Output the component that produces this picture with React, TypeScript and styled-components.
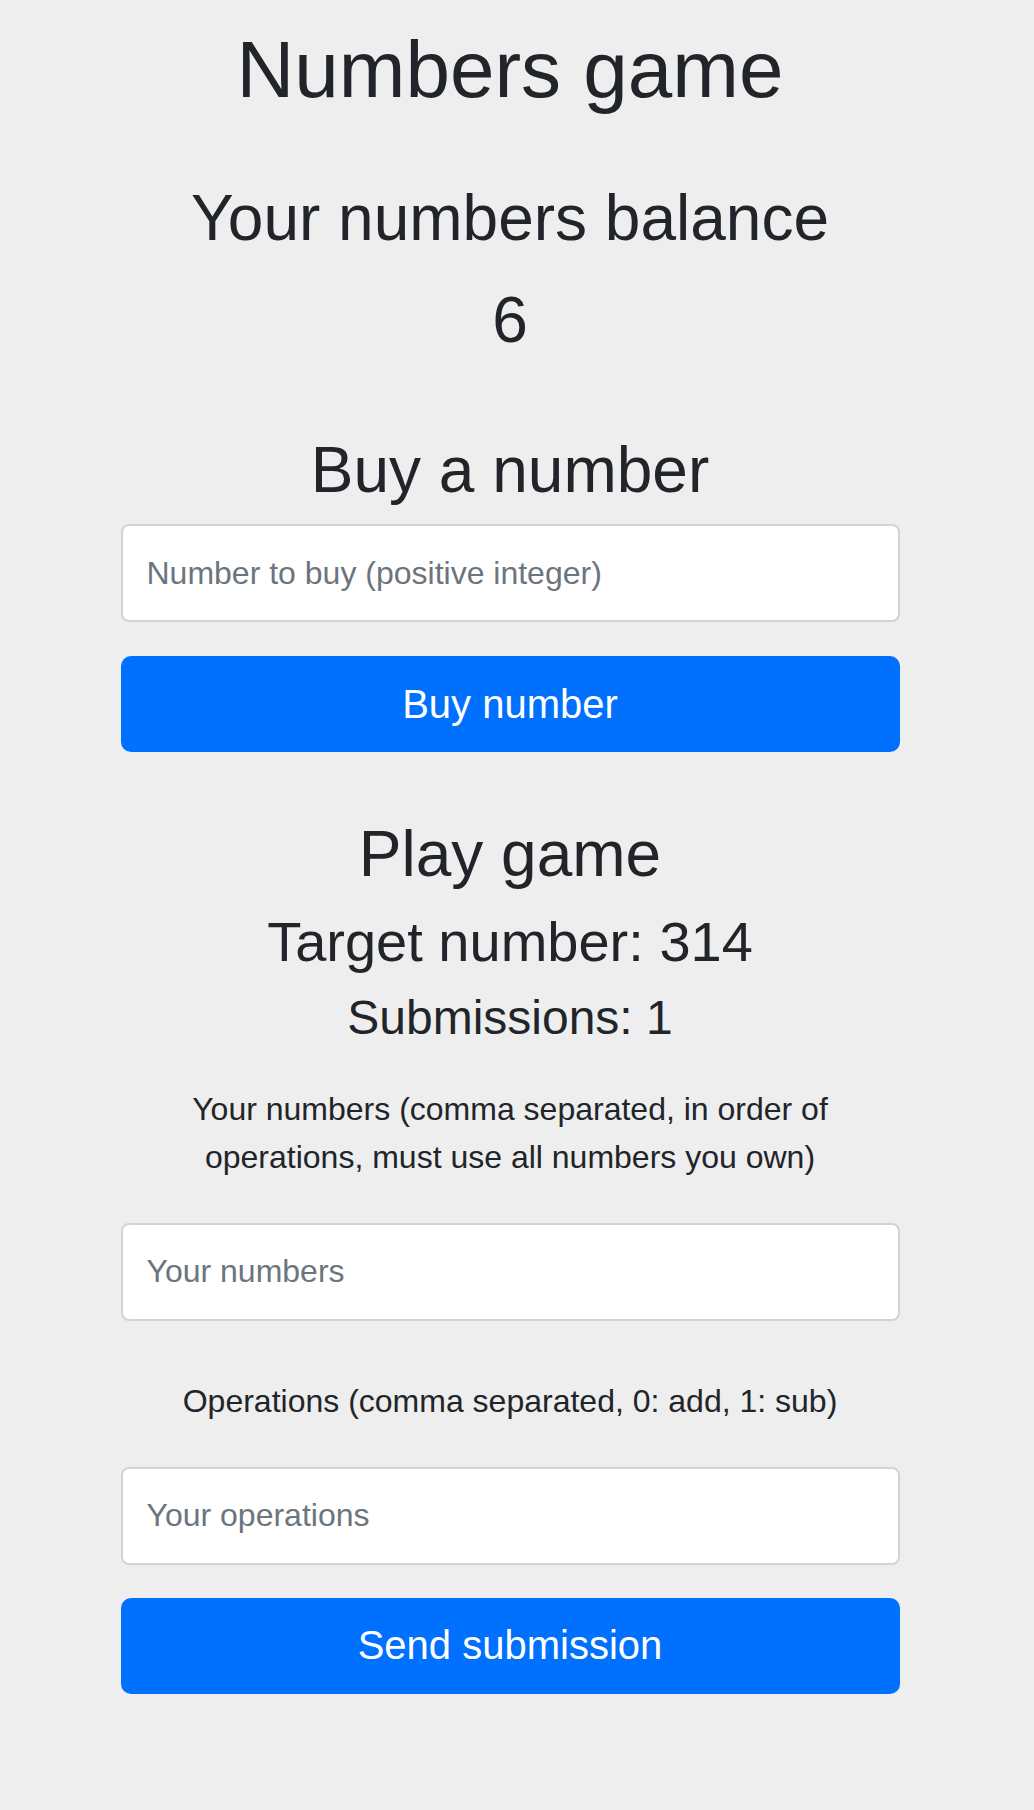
import React from 'react';
import styled, { createGlobalStyle } from 'styled-components';

const GlobalStyle = createGlobalStyle`
  html, body {
    margin: 0;
    padding: 0;
    background-color: #eeeeee;
  }

  body {
    font-family: "Liberation Sans", Arial, Helvetica, sans-serif;
    color: #212529;
  }
`;

const Page = styled.div`
  width: 1020px;
  padding-top: 22px;
  padding-bottom: 116px;
`;

const Column = styled.div`
  width: 779px;
  margin: 0 auto;
  display: flex;
  flex-direction: column;
  align-items: stretch;
  text-align: center;
`;

const Title = styled.h1`
  margin: 0;
  font-size: 80px;
  line-height: 96px;
  font-weight: 400;
`;

const Heading = styled.h2<{ $size: number; $mt: number }>`
  margin: ${(props) => props.$mt}px 0 0;
  font-size: ${(props) => props.$size}px;
  line-height: 1.2;
  font-weight: 400;
`;

const Label = styled.label<{ $mt: number }>`
  display: block;
  margin-top: ${(props) => props.$mt}px;
  font-size: 32px;
  line-height: 48px;
  color: #212529;
`;

const Input = styled.input<{ $mt: number }>`
  box-sizing: border-box;
  width: 100%;
  height: 98px;
  margin-top: ${(props) => props.$mt}px;
  padding: 0 24px;
  border: 2px solid #ced4da;
  border-radius: 8px;
  background-color: #fff;
  font-family: "Liberation Sans", Arial, Helvetica, sans-serif;
  font-size: 32px;
  color: #495057;
  outline: none;

  &::placeholder {
    color: #6c757d;
    opacity: 1;
  }
`;

const Button = styled.button<{ $mt: number }>`
  box-sizing: border-box;
  width: 100%;
  height: 96px;
  margin-top: ${(props) => props.$mt}px;
  border: none;
  border-radius: 10px;
  background-color: #0070ff;
  color: #fff;
  font-family: "Liberation Sans", Arial, Helvetica, sans-serif;
  font-size: 40px;
  cursor: pointer;
`;

const App: React.FC = () => {
  const balance = 6;
  const target = 314;
  const submissions = 1;

  return (
    <>
      <GlobalStyle />
      <Page>
        <Column>
          <Title>Numbers game</Title>
          <Heading $size={64} $mt={62}>Your numbers balance</Heading>
          <Heading $size={64} $mt={25}>{balance}</Heading>

          <Heading $size={64} $mt={73}>Buy a number</Heading>
          <Input $mt={16} placeholder="Number to buy (positive integer)" />
          <Button $mt={34}>Buy number</Button>

          <Heading $size={64} $mt={64}>Play game</Heading>
          <Heading $size={56} $mt={15}>Target number: {target}</Heading>
          <Heading $size={48} $mt={14}>Submissions: {submissions}</Heading>

          <Label $mt={38}>
            Your numbers (comma separated, in order of operations, must use all numbers you own)
          </Label>
          <Input $mt={42} placeholder="Your numbers" />
          <Label $mt={56}>Operations (comma separated, 0: add, 1: sub)</Label>
          <Input $mt={42} placeholder="Your operations" />
          <Button $mt={33}>Send submission</Button>
        </Column>
      </Page>
    </>
  );
};

export default App;
